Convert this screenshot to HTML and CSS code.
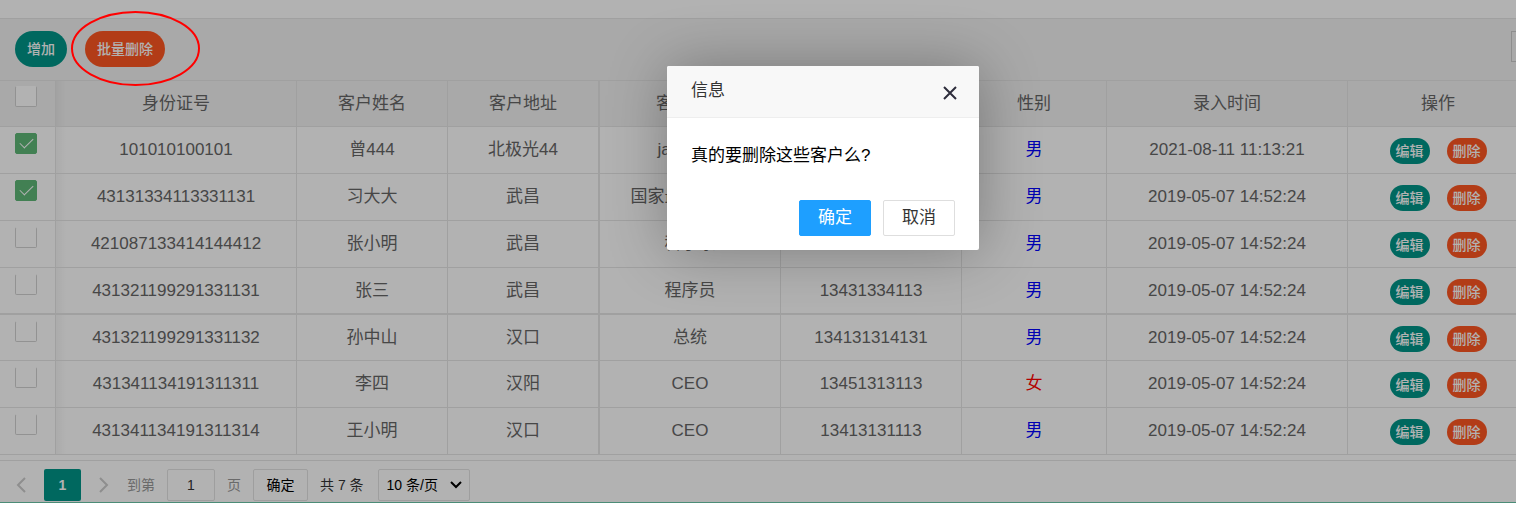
FILE: index.html
```
<!DOCTYPE html>
<html lang="zh-CN">
<head>
<meta charset="utf-8">
<title>客户管理</title>
<link rel="stylesheet" href="styles.css">
</head>
<body>
<main class="page">
  <div class="toolbar">
    <button class="btn btn-add" type="button">增加</button>
    <button class="btn btn-danger" type="button">批量删除</button>
    <button class="filter" type="button" aria-label="筛选列"></button>
  </div>
  <table class="grid">
    <colgroup><col class="c-check"><col class="c-id"><col class="c-name"><col class="c-addr"><col class="c-job"><col class="c-phone"><col class="c-sex"><col class="c-time"><col class="c-act"></colgroup>
    <thead>
      <tr><th class="pick"><input type="checkbox" aria-label="全选"></th><th class="first">身份证号</th><th>客户姓名</th><th class="thick">客户地址</th><th>客户职位</th><th>客户电话</th><th>性别</th><th>录入时间</th><th class="acts-head">操作</th></tr>
    </thead>
    <tbody>
      <tr><td class="pick"><input type="checkbox" aria-label="选择" checked></td><td class="first">101010100101</td><td>曾444</td><td class="thick">北极光44</td><td>java开发</td><td>13431334113</td><td class="male">男</td><td>2021-08-11 11:13:21</td><td class="acts"><button class="mini edit" type="button">编辑</button><button class="mini del" type="button">删除</button></td></tr>
      <tr><td class="pick"><input type="checkbox" aria-label="选择" checked></td><td class="first">43131334113331131</td><td>习大大</td><td class="thick">武昌</td><td>国家最高领导人</td><td>13431334113</td><td class="male">男</td><td>2019-05-07 14:52:24</td><td class="acts"><button class="mini edit" type="button">编辑</button><button class="mini del" type="button">删除</button></td></tr>
      <tr><td class="pick"><input type="checkbox" aria-label="选择"></td><td class="first">421087133414144412</td><td>张小明</td><td class="thick">武昌</td><td>科学家</td><td>13431334113</td><td class="male">男</td><td>2019-05-07 14:52:24</td><td class="acts"><button class="mini edit" type="button">编辑</button><button class="mini del" type="button">删除</button></td></tr>
      <tr class="heavy"><td class="pick"><input type="checkbox" aria-label="选择"></td><td class="first">431321199291331131</td><td>张三</td><td class="thick">武昌</td><td>程序员</td><td>13431334113</td><td class="male">男</td><td>2019-05-07 14:52:24</td><td class="acts"><button class="mini edit" type="button">编辑</button><button class="mini del" type="button">删除</button></td></tr>
      <tr class="short"><td class="pick"><input type="checkbox" aria-label="选择"></td><td class="first">431321199291331132</td><td>孙中山</td><td class="thick">汉口</td><td>总统</td><td>134131314131</td><td class="male">男</td><td>2019-05-07 14:52:24</td><td class="acts"><button class="mini edit" type="button">编辑</button><button class="mini del" type="button">删除</button></td></tr>
      <tr><td class="pick"><input type="checkbox" aria-label="选择"></td><td class="first">431341134191311311</td><td>李四</td><td class="thick">汉阳</td><td>CEO</td><td>13451313113</td><td class="female">女</td><td>2019-05-07 14:52:24</td><td class="acts"><button class="mini edit" type="button">编辑</button><button class="mini del" type="button">删除</button></td></tr>
      <tr><td class="pick"><input type="checkbox" aria-label="选择"></td><td class="first">431341134191311314</td><td>王小明</td><td class="thick">汉口</td><td>CEO</td><td>13413131113</td><td class="male">男</td><td>2019-05-07 14:52:24</td><td class="acts"><button class="mini edit" type="button">编辑</button><button class="mini del" type="button">删除</button></td></tr>
    </tbody>
  </table>
  <nav class="pager" aria-label="分页">
    <button class="arrow" type="button" aria-label="上一页"><svg width="12" height="16" viewBox="0 0 12 16"><path d="M10 1 3 8l7 7"/></svg></button>
    <a class="current" href="#">1</a>
    <button class="arrow next" type="button" aria-label="下一页"><svg width="12" height="16" viewBox="0 0 12 16"><path d="m2 1 7 7-7 7"/></svg></button>
    <label class="hint" for="goto">到第</label>
    <input class="goto" id="goto" type="text" value="1">
    <span class="hint">页</span>
    <button class="go" type="button">确定</button>
    <span class="total">共 7 条</span>
    <span class="size-wrap"><select class="size" aria-label="每页条数"><option>10 条/页</option></select><svg class="caret" width="14" height="10" viewBox="0 0 14 10"><path d="m2 2 5 5 5-5"/></svg></span>
  </nav>
</main>
<div class="shade"></div>
<svg class="mark" width="130" height="76" viewBox="0 0 130 76"><ellipse cx="64.5" cy="37.5" rx="63.5" ry="36.5"/></svg>
<section class="dialog" role="dialog" aria-labelledby="dialog-title">
  <header class="dialog-head"><span id="dialog-title">信息</span>
    <button class="close" type="button" aria-label="关闭"><svg width="16" height="16" viewBox="0 0 16 16"><path d="m2 2 12 12M14 2 2 14"/></svg></button>
  </header>
  <p class="dialog-body">真的要删除这些客户么?</p>
  <footer class="dialog-foot"><button class="choice ok" type="button">确定</button><button class="choice" type="button">取消</button></footer>
</section>
</body>
</html>
```
FILE: styles.css
```
* { box-sizing: border-box; }
body {
  margin: 0;
  background: #fff;
  color: #666;
  font: 17px/24px "Liberation Sans", "Noto Sans CJK SC", sans-serif;
  overflow: hidden;
}
button, input, select { font: inherit; margin: 0; }
button { padding: 0; border: 0; }
.page { padding-top: 18px; border-bottom: 1px solid #6cc9ab; overflow: hidden; }

.toolbar {
  display: flex;
  align-items: center;
  gap: 18px;
  height: 63px;
  padding: 0 0 2px 15px;
  background: #f2f2f2;
  border: solid #e6e6e6;
  border-width: 1px 0;
}
.btn { height: 36px; padding: 0 12px; border-radius: 18px; color: #fff; font-size: 14px; font-weight: 500; }
.btn-add, .edit { background: #009688; }
.btn-danger, .del { background: #ff5722; }
.filter { width: 31px; height: 31px; margin: 0 -26px 4px auto; border: 1px solid #ccc; background: transparent; }

.grid { width: 100%; table-layout: fixed; border-collapse: separate; border-spacing: 0; }
.c-check { width: 56px; }
.c-id, .c-time { width: 241px; }
.c-name { width: 151px; }
.c-addr { width: 152px; }
.c-job, .c-phone { width: 181px; }
.c-sex { width: 145px; }
th, td {
  height: 47px;
  padding: 0;
  border: solid #e6e6e6;
  border-width: 0 1px 1px 0;
  font-weight: 400;
  text-align: center;
  white-space: nowrap;
}
th { height: 46px; background: #f2f2f2; }
th:last-child, td:last-child { border-right: 0; }
.thick { border-right-width: 2px; }
.heavy td { border-bottom-width: 2px; }
.short td { height: 46px; }
.first { background-image: linear-gradient(90deg, rgba(0,0,0,.04), transparent 10px); }
.pick { padding: 6px 0 0 15px; vertical-align: top; text-align: left; }
th.pick { padding-top: 5px; }
.pick input {
  appearance: none;
  display: block;
  width: 22px;
  height: 21px;
  border: 1px solid #d2d2d2;
  border-top-color: transparent;
  border-radius: 2px;
  background: #fff;
}
.pick input:checked {
  border-color: #5fb878;
  background: #5fb878;
  position: relative;
}
.pick input:checked::after {
  content: "";
  position: absolute;
  left: 4px;
  top: 4px;
  width: 12px;
  height: 6px;
  border: solid #fff;
  border-width: 0 0 1px 1px;
  transform: rotate(-45deg);
}
.male { color: #00f; }
.female { color: #f00; }
.acts-head { padding-left: 12px; }
.acts { padding: 2px 0 0 12px; }
.mini { height: 26px; padding: 0 6px; border-radius: 13px; color: #fff; font-size: 14px; font-weight: 500; line-height: 26px; vertical-align: middle; }
.mini + .mini { margin-left: 17px; }

.pager {
  display: flex;
  align-items: center;
  height: 42px;
  margin-top: 5px;
  padding: 8px 0 1px 15px;
  border-top: 1px solid #e6e6e6;
  color: #333;
  font-size: 14px;
}
.arrow { width: 12px; height: 16px; background: none; }
.arrow svg, .close svg { display: block; fill: none; stroke: #ccc; stroke-width: 2; }
.current { width: 37px; height: 32px; margin: 0 17px; border-radius: 2px; background: #009688; color: #fff; font-weight: 700; line-height: 32px; text-align: center; text-decoration: none; }
.hint { color: #999; }
.next + .hint { margin-left: 17px; }
.goto { width: 48px; height: 32px; margin: 0 12px; border: 1px solid #e2e2e2; border-radius: 2px; background: #fff; color: #333; text-align: center; }
.go { width: 55px; height: 32px; margin: 0 12px; border: 1px solid #e2e2e2; border-radius: 2px; background: #fff; color: #000; }
.size-wrap { display: grid; align-items: center; margin-left: 14px; }
.size { grid-area: 1 / 1; appearance: none; width: 92px; height: 32px; padding: 0 8px; border: 1px solid #e2e2e2; border-radius: 2px; background: #fff; color: #000; }
.caret { grid-area: 1 / 1; justify-self: end; margin-right: 7px; fill: none; stroke: #000; stroke-width: 2; pointer-events: none; }

.shade { position: absolute; inset: 0 0 8px; background: rgba(0,0,0,.3); }
.mark { position: absolute; left: 71px; top: 11px; fill: none; stroke: #f00; stroke-width: 2; }
.dialog {
  position: absolute;
  left: 667px;
  top: 66px;
  width: 312px;
  border-radius: 2px;
  background: #fff;
  box-shadow: 1px 1px 60px rgba(0,0,0,.3);
  color: #000;
}
.dialog-head {
  display: flex;
  justify-content: space-between;
  align-items: center;
  height: 52px;
  padding: 0 20px 2px 24px;
  border-bottom: 1px solid #eee;
  border-radius: 2px 2px 0 0;
  background: #f8f8f8;
  color: #333;
}
.close { width: 18px; padding: 4px 1px 0; background: none; }
.close svg { stroke: #2e2d3c; }
.dialog-body { margin: 0; padding: 26px 24px 32px; }
.dialog-foot { display: flex; justify-content: flex-end; gap: 12px; padding: 0 24px 14px; }
.choice { width: 72px; height: 36px; border: 1px solid #dedede; border-radius: 2px; background: #fff; color: #333; }
.ok { border-color: #1e9fff; background: #1e9fff; color: #fff; }
```
